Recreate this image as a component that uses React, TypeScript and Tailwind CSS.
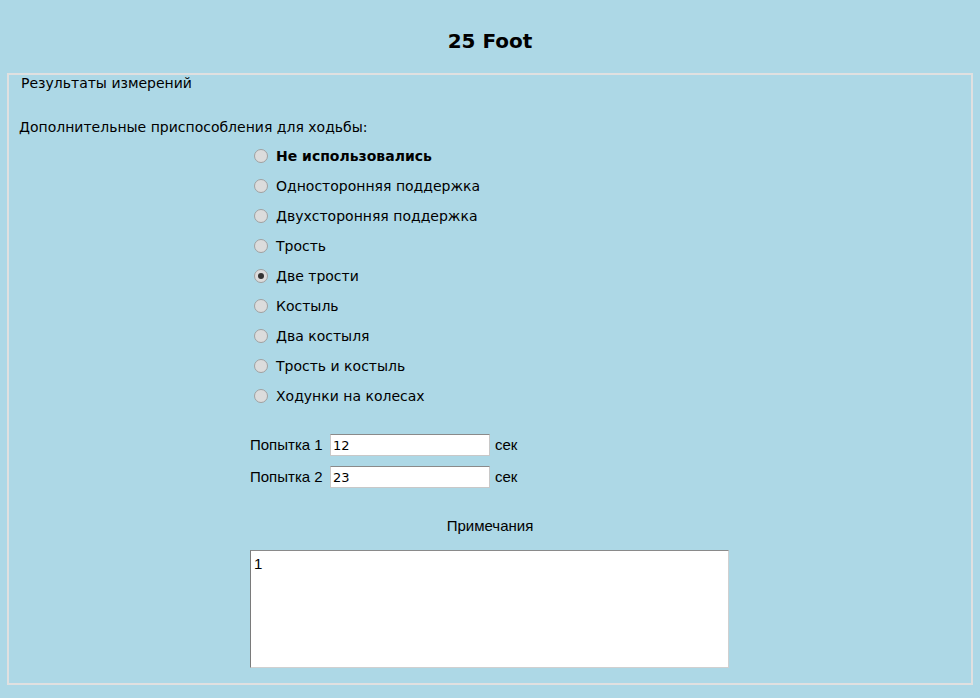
import React from 'react';

const aids = [
  'Не использовались',
  'Односторонняя поддержка',
  'Двухсторонняя поддержка',
  'Трость',
  'Две трости',
  'Костыль',
  'Два костыля',
  'Трость и костыль',
  'Ходунки на колесах',
];

const Radio: React.FC<{ checked?: boolean }> = ({ checked }) => (
  <span className="w-[14px] h-[14px] rounded-full border border-[#a0a0a0] bg-[#dcdcdc] flex items-center justify-center shrink-0">
    {checked && <span className="w-[6px] h-[6px] rounded-full bg-[#333]" />}
  </span>
);

export default function App() {
  const selected = 'Две трости';

  return (
    <div className="min-h-screen bg-[#add8e6] text-black font-['DejaVu_Sans',sans-serif]">
      {/* Title */}
      <div className="h-[73px] pt-[26px] leading-[30px] text-center text-[20px] font-bold">25 Foot</div>

      {/* Results box */}
      <div className="mx-[7px] h-[612px] border-2 border-[#e0e0e0]">
        <div className="pl-[12px] leading-[16px] text-[14px]">Результаты измерений</div>

        <div className="pl-[10px] mt-[26px] leading-[20px] text-[14px]">Дополнительные приспособления для ходьбы:</div>

        <div className="ml-[245px] mt-[4px] flex flex-col">
          {aids.map((a) => (
            <label key={a} className="h-[30px] flex items-center gap-[8px] text-[14px]">
              <Radio checked={a === selected} />
              <span className={a === 'Не использовались' ? 'font-bold' : ''}>{a}</span>
            </label>
          ))}
        </div>

        {/* Attempts */}
        <div className="ml-[241px] mt-[23px] flex flex-col gap-[10px] font-['Liberation_Sans',sans-serif] text-[15px]">
          {[
            ['Попытка 1', '12'],
            ['Попытка 2', '23'],
          ].map(([label, val]) => (
            <div key={label} className="flex items-center h-[22px]">
              <span className="w-[80px]">{label}</span>
              <input
                defaultValue={val}
                className="w-[160px] h-[22px] px-[2px] bg-white border border-[#c8c8c8] border-t-[#8a8a8a] text-[13px] outline-none font-['DejaVu_Sans',sans-serif]"
              />
              <span className="ml-[5px]">сек</span>
            </div>
          ))}
        </div>

        <div className="mt-[28px] text-center leading-[20px] font-['Liberation_Sans',sans-serif] text-[15px]">Примечания</div>

        <div className="ml-[241px] mt-[14px]">
          <textarea
            defaultValue="1"
            className="block w-[479px] h-[118px] px-[3px] py-[3px] bg-white border border-[#d0d0d0] border-t-[#8a8a8a] border-l-[#7a7a7a] resize-none outline-none font-['Liberation_Sans',sans-serif] text-[15px] leading-[20px]"
          />
        </div>
      </div>
    </div>
  );
}
